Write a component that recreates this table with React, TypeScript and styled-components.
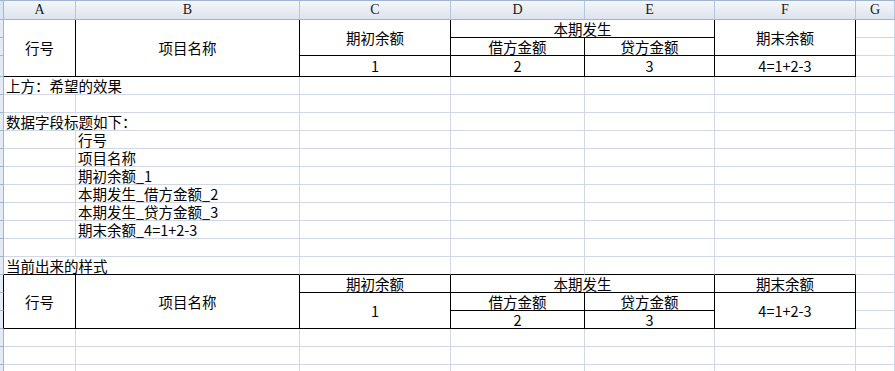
import React from 'react';
import styled, { createGlobalStyle } from 'styled-components';

const GlobalStyle = createGlobalStyle`
  html, body {
    margin: 0;
    padding: 0;
    background: #ffffff;
  }
`;

const GRID = '#d0d7e5';
const HEAD_LINE = '#9eb6ce';
const INK = '#000000';

const Sheet = styled.div`
  display: grid;
  grid-template-columns: 4px 72px 224px 151px 134px 130px 141px 1fr;
  grid-template-rows: 19px 18px 18px 21px repeat(17, 18px);
  width: 895px;
  height: 371px;
  overflow: hidden;
  border-top: 1px solid ${HEAD_LINE};
  box-sizing: border-box;
  font-family: 'Noto Sans CJK SC', 'Noto Sans', sans-serif;
  font-size: 14.5px;
  color: #000;
`;

const Corner = styled.div`
  grid-column: 1;
  grid-row: 1;
  background: #dbe5f3;
  border-right: 1px solid ${HEAD_LINE};
  border-bottom: 1px solid ${HEAD_LINE};
`;

const ColHead = styled.div<{ $col: number }>`
  grid-column: ${p => p.$col};
  grid-row: 1;
  display: flex;
  align-items: center;
  justify-content: center;
  background: linear-gradient(#f4f6fa, #dde4ee);
  border-right: 1px solid #b6c7db;
  border-bottom: 1px solid ${HEAD_LINE};
  box-sizing: border-box;
  font-family: 'Liberation Serif', serif;
  font-size: 14px;
  color: #1a1a1a;
`;

const RowHead = styled.div<{ $row: number; $ink?: boolean }>`
  grid-column: 1;
  grid-row: ${p => p.$row};
  background: #e4ebf6;
  border-right: 1px solid ${p => (p.$ink ? INK : HEAD_LINE)};
  border-bottom: 1px solid ${HEAD_LINE};
  box-sizing: border-box;
`;

const Cell = styled.div<{
  $col: number;
  $row: number;
  $cs: number;
  $rs: number;
  $box?: boolean;
  $base?: boolean;
  $left?: boolean;
}>`
  grid-column: ${p => p.$col} / span ${p => p.$cs};
  grid-row: ${p => p.$row} / span ${p => p.$rs};
  display: flex;
  align-items: center;
  justify-content: ${p => (p.$left ? 'flex-start' : 'center')};
  padding: 1px 2px 0;
  white-space: nowrap;
  box-sizing: border-box;
  border-right: 1px solid ${p => (p.$box ? INK : GRID)};
  border-bottom: 1px solid ${p => (p.$box || p.$base ? INK : GRID)};
  line-height: 1;
`;

type CellDef = {
  r: number;
  c: number;
  rs?: number;
  cs?: number;
  text?: string;
  box?: boolean;
  base?: boolean;
  left?: boolean;
};

const cells: CellDef[] = [
  // 上方：希望的效果
  { r: 1, c: 1, rs: 3, text: '行号', box: true },
  { r: 1, c: 2, rs: 3, text: '项目名称', box: true },
  { r: 1, c: 3, rs: 2, text: '期初余额', box: true },
  { r: 1, c: 4, cs: 2, text: '本期发生', box: true },
  { r: 1, c: 6, rs: 2, text: '期末余额', box: true },
  { r: 2, c: 4, text: '借方金额', box: true },
  { r: 2, c: 5, text: '贷方金额', box: true },
  { r: 3, c: 3, text: '1', box: true },
  { r: 3, c: 4, text: '2', box: true },
  { r: 3, c: 5, text: '3', box: true },
  { r: 3, c: 6, text: '4=1+2-3', box: true },
  { r: 4, c: 1, cs: 2, text: '上方：希望的效果', left: true },
  { r: 6, c: 1, cs: 2, text: '数据字段标题如下：', left: true },
  { r: 7, c: 2, text: '行号', left: true },
  { r: 8, c: 2, text: '项目名称', left: true },
  { r: 9, c: 2, text: '期初余额_1', left: true },
  { r: 10, c: 2, text: '本期发生_借方金额_2', left: true },
  { r: 11, c: 2, text: '本期发生_贷方金额_3', left: true },
  { r: 12, c: 2, text: '期末余额_4=1+2-3', left: true },
  // 当前出来的样式
  { r: 14, c: 1, cs: 2, text: '当前出来的样式', left: true, base: true },
  { r: 14, c: 3, base: true },
  { r: 14, c: 4, base: true },
  { r: 14, c: 5, base: true },
  { r: 14, c: 6, base: true },
  { r: 15, c: 1, rs: 3, text: '行号', box: true },
  { r: 15, c: 2, rs: 3, text: '项目名称', box: true },
  { r: 15, c: 3, text: '期初余额', box: true },
  { r: 15, c: 4, cs: 2, text: '本期发生', box: true },
  { r: 15, c: 6, text: '期末余额', box: true },
  { r: 16, c: 3, rs: 2, text: '1', box: true },
  { r: 16, c: 4, text: '借方金额', box: true },
  { r: 16, c: 5, text: '贷方金额', box: true },
  { r: 16, c: 6, rs: 2, text: '4=1+2-3', box: true },
  { r: 17, c: 4, text: '2', box: true },
  { r: 17, c: 5, text: '3', box: true },
];

const ROWS = 20;
const COLS = ['A', 'B', 'C', 'D', 'E', 'F', 'G'];

// fill every sheet cell that no merged/text cell covers, so the gridlines stay complete
const buildCells = (): CellDef[] => {
  const taken = new Set<string>();
  cells.forEach(cell => {
    for (let r = cell.r; r < cell.r + (cell.rs || 1); r++) {
      for (let c = cell.c; c < cell.c + (cell.cs || 1); c++) {
        taken.add(`${r}:${c}`);
      }
    }
  });
  const filler: CellDef[] = [];
  for (let r = 1; r <= ROWS; r++) {
    for (let c = 1; c <= COLS.length; c++) {
      if (!taken.has(`${r}:${c}`)) filler.push({ r, c });
    }
  }
  return [...cells, ...filler];
};

const App: React.FC = () => {
  const all = buildCells();

  return (
    <>
      <GlobalStyle />
      <Sheet>
        <Corner />
        {COLS.map((label, i) => (
          <ColHead key={label} $col={i + 2}>
            {label}
          </ColHead>
        ))}
        {Array.from({ length: ROWS }, (_, i) => (
          <RowHead key={i} $row={i + 2} $ink={i + 1 >= 15 && i + 1 <= 17} />
        ))}
        {all.map(cell => (
          <Cell
            key={`${cell.r}-${cell.c}`}
            $col={cell.c + 1}
            $row={cell.r + 1}
            $cs={cell.cs || 1}
            $rs={cell.rs || 1}
            $box={cell.box}
            $base={cell.base}
            $left={cell.left}
          >
            {cell.text}
          </Cell>
        ))}
      </Sheet>
    </>
  );
};

export default App;
